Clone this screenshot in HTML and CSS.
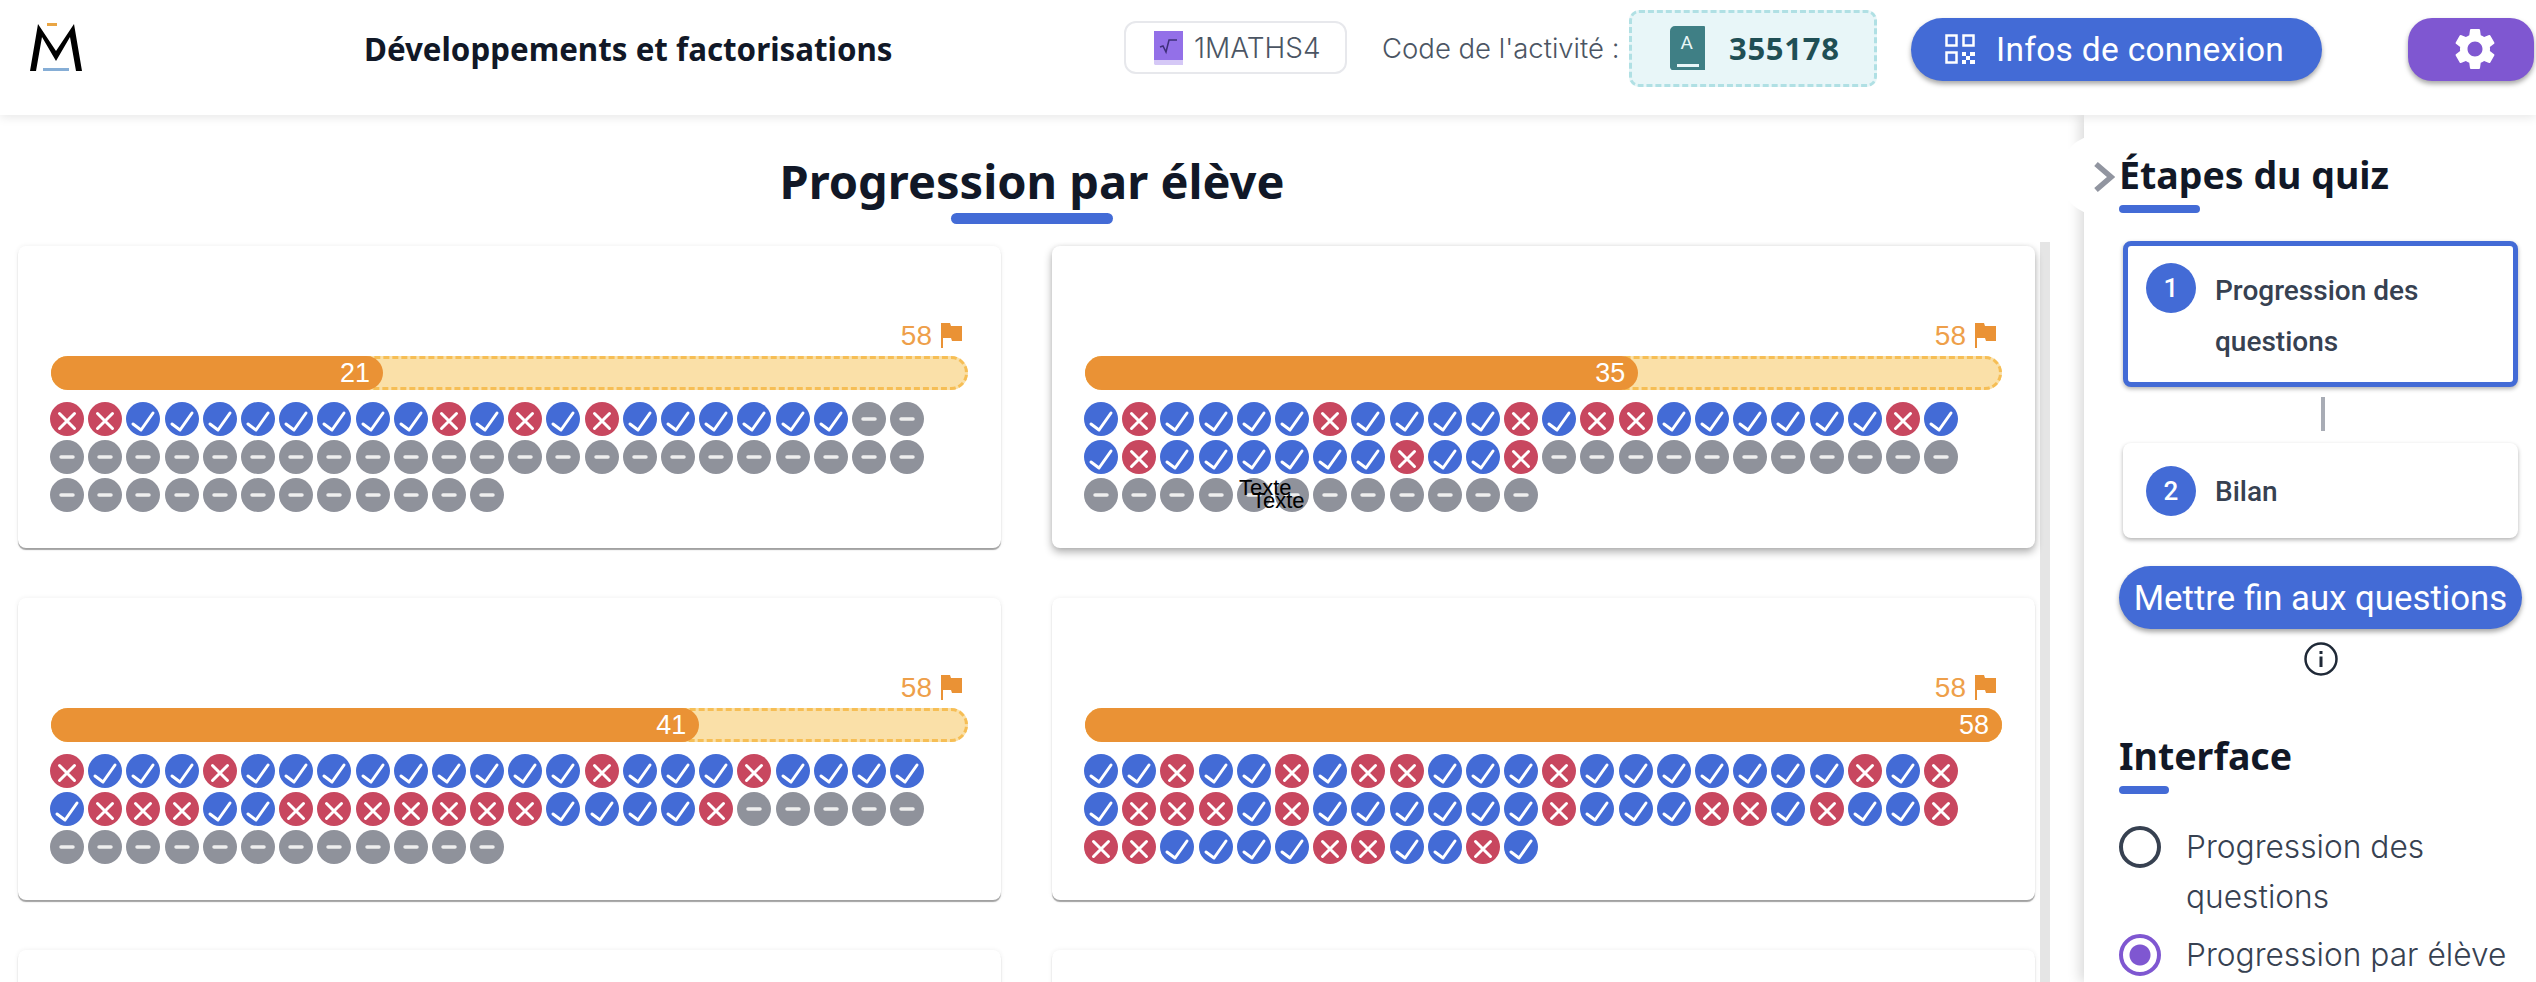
FILE: index.html
```html
<!DOCTYPE html>
<html lang="fr">
<head>
  <meta charset="UTF-8" />
  <title>Développements et factorisations</title>
  <link rel="stylesheet" href="styles.css">
</head>
<body>

<svg class="sprites" width="0" height="0">
  <symbol id="ic-ok" viewBox="0 0 34 34"><path d="M7 22l8 6L27 11" fill="none" stroke="#fff" stroke-width="3" stroke-linecap="round" stroke-linejoin="round"/></symbol>
  <symbol id="ic-ko" viewBox="0 0 34 34"><path d="M9.5 11.500l15 15M24.500 11.500l-15 15" fill="none" stroke="#fff" stroke-width="3" stroke-linecap="round"/></symbol>
  <symbol id="ic-vide" viewBox="0 0 34 34"><path d="M11 17h12" fill="none" stroke="#eee" stroke-width="3.500" stroke-linecap="round"/></symbol>
  <symbol id="ic-drapeau" viewBox="0 0 21 25"><path d="M0 0h2v25H0z M2 0h7l1 3h11v15H11l-1-3H2z" fill="#ea9235"/></symbol>
</svg>

<header class="entete">
  <svg class="logo" viewBox="0 0 52 48" width="52" height="48">
    <path d="M17 0h10v3H17z" fill="#e9a544"/>
    <path d="M13 45h26v3H13z" fill="#86aed6"/>
    <path d="M8 1L0 48h6L12 14l14 24 14-24 6 34h6L44 1 26 28z" fill="#000"/>
  </svg>
  <div class="titre-activite">Développements et factorisations</div>
  <div class="classe">
    <svg width="30" height="34" viewBox="0 0 30 34">
      <path d="M0 0h29v34H1l-1-1z" fill="#d5c8f6"/>
      <path d="M0 0h29v29H0z" fill="#9370e8"/>
      <path d="M6 16l3-1 3 6 3-12h8" fill="none" stroke="#3f2f7a" stroke-width="1.500"/>
    </svg>
    <span>1MATHS4</span>
  </div>
  <div class="code-label">Code de l'activité :</div>
  <div class="code-box">
    <svg width="36" height="44" viewBox="0 0 36 44">
      <path d="M5 0h29a1 1 0 0 1 1 1v35H7a3 3 0 0 0 0 6h28v2H6a6 6 0 0 1-6-6V5a5 5 0 0 1 5-5z" fill="#3f7f85"/>
      <path d="M6 35h29v9H6a4 4 0 0 1-6-4v-2a5 5 0 0 1 6-3z" fill="#3f7f85"/>
      <path d="M7 38h22v3H7z" fill="#e8f6f8"/>
      <text x="17" y="23" class="book-lettre">A</text>
    </svg>
    <span>355178</span>
  </div>
  <button class="btn-infos" type="button">
    <svg width="31" height="30" viewBox="0 0 31 30" fill="none" stroke="#fff" stroke-width="2.500">
      <rect x="1.500" y="1.500" width="10" height="10"/>
      <rect x="18.500" y="1.500" width="10" height="10"/>
      <rect x="1.500" y="18.500" width="10" height="10"/>
      <path d="M17 18h4v4h-4z M25 18h5v4h-5z M21 22h4v4h-4z M17 26h4v4h-4z M25 26h5v4h-5z" fill="#fff" stroke="none"/>
    </svg>
    <span>Infos de connexion</span>
  </button>
  <button class="btn-reglages" type="button">
    <svg width="50" height="50" viewBox="0 0 24 24"><path fill="#fff" d="M19.140 12.940c.04-.3.06-.61.06-.94 0-.32-.02-.64-.07-.94l2.030-1.580c.18-.14.23-.41.12-.61l-1.920-3.320c-.12-.22-.37-.29-.59-.22l-2.390.96c-.5-.38-1.030-.7-1.620-.94l-.36-2.540c-.04-.24-.24-.41-.48-.41h-3.840c-.24 0-.43.17-.47.41l-.36 2.540c-.59.24-1.130.57-1.620.94l-2.390-.96c-.22-.08-.47 0-.59.22L2.740 8.870c-.12.21-.08.47.12.61l2.030 1.580c-.05.3-.09.63-.09.94s.02.64.07.94l-2.030 1.580c-.18.14-.23.41-.12.61l1.920 3.320c.12.22.37.29.59.22l2.390-.96c.5.38 1.030.7 1.620.94l.36 2.540c.05.24.24.41.48.41h3.840c.24 0 .44-.17.47-.41l.36-2.540c.59-.24 1.130-.56 1.620-.94l2.390.96c.22.08.47 0 .59-.22l1.920-3.320c.12-.22.07-.47-.12-.61l-2.010-1.580zM12 15.600c-1.980 0-3.600-1.620-3.600-3.600s1.620-3.600 3.600-3.600 3.600 1.620 3.600 3.600-1.620 3.600-3.600 3.600z"/></svg>
  </button>
</header>

<div class="page">
  <main class="zone">
    <h1 class="titre-page">Progression par élève</h1>
    <div class="defilement">
      <div class="cartes" id="cartes"></div>
      <div class="barre-defil"></div>
    </div>
  </main>

  <aside class="panneau">
    <div class="onglet">
      <svg width="22" height="32" viewBox="0 0 22 32"><path d="M3 3l15 13L3 29" fill="none" stroke="#9195a0" stroke-width="5.500"/></svg>
    </div>
    <h2 class="titre-panneau titre-etapes">Étapes du quiz</h2>
    <div class="etape etape-active">
      <span class="etape-num">1</span>
      <span class="etape-nom">Progression des questions</span>
    </div>
    <div class="etape-lien"></div>
    <div class="etape">
      <span class="etape-num">2</span>
      <span class="etape-nom">Bilan</span>
    </div>
    <button class="btn-fin" type="button">Mettre fin aux questions</button>
    <svg class="info" width="36" height="36" viewBox="0 0 36 36">
      <circle cx="18" cy="18" r="15.500" fill="none" stroke="#1f2937" stroke-width="2.500"/>
      <path d="M16.500 15.500h3V26h-3z M16.500 10h3v3h-3z" fill="#1f2937"/>
    </svg>
    <h2 class="titre-panneau titre-interface">Interface</h2>
    <label class="choix"><span class="radio"></span><span>Progression des questions</span></label>
    <label class="choix"><span class="radio radio-on"></span><span>Progression par élève</span></label>
  </aside>
</div>

<script src="script.js"></script>
</body>
</html>
```

FILE: styles.css
```css
* { box-sizing: border-box; }
html, body { height: 100%; }
body {
  margin: 0;
  overflow: hidden;
  background: #fff;
  color: #111827;
  font-family: "Inter", "Liberation Sans", sans-serif;
}
.sprites { position: absolute; }
button { border: none; font-family: inherit; cursor: pointer; }

/* entete */
.entete {
  position: relative;
  z-index: 5;
  display: flex;
  align-items: center;
  height: 115px;
  background: #fff;
  box-shadow: 0 2px 10px rgba(0, 0, 0, .1);
}
.logo { margin: -22px 0 0 30px; flex: none; }
.titre-activite {
  margin-left: 282px;
  width: 529px;
  font: 700 31.300px "Noto Sans", sans-serif;
  color: #111827;
  white-space: nowrap;
  margin-top: -17px;
}
.classe {
  display: flex;
  align-items: center;
  gap: 10px;
  width: 223px;
  height: 53px;
  margin: -20px 0 0 231px;
  padding-left: 28px;
  border: 2px solid #e7e8ec;
  border-radius: 12px;
  font-weight: 300;
  font-size: 28px;
  color: #4b5563;
}
.code-label {
  margin: -20px 0 0 35px;
  width: 247px;
  font-weight: 300;
  font-size: 27.500px;
  color: #4b5563;
  white-space: nowrap;
}
.code-box {
  display: flex;
  align-items: center;
  gap: 23px;
  width: 248px;
  height: 77px;
  margin: -19px 0 0 0;
  padding-left: 38px;
  background: #e8f6f8;
  border: 3px dashed #b0e0e4;
  border-radius: 10px;
  font: 700 31px "Noto Sans", sans-serif;
  letter-spacing: .7px;
  color: #1f4f55;
}
.book-lettre { font: 400 19px "Roboto", sans-serif; fill: #e8f6f8; text-anchor: middle; }
.btn-infos {
  display: flex;
  align-items: center;
  gap: 20px;
  width: 411px;
  height: 63px;
  margin: -17px 0 0 34px;
  padding-left: 34px;
  background: #436bd6;
  border-radius: 32px;
  box-shadow: 0 3px 5px rgba(0, 0, 0, .35);
  color: #fff;
  font: 400 33.500px "Roboto", sans-serif;
  letter-spacing: .3px;
  white-space: nowrap;
}
.btn-reglages {
  display: flex;
  align-items: center;
  justify-content: center;
  width: 126px;
  height: 63px;
  margin: -17px 0 0 86px;
  padding: 0 0 0 8px;
  background: #7f57d1;
  border-radius: 24px;
  box-shadow: 0 3px 5px rgba(0, 0, 0, .35);
}

/* zone principale */
.page { display: flex; height: calc(100% - 115px); overflow: hidden; }
.zone { flex: 1; min-width: 0; }
.titre-page {
  width: 2036px;
  margin: 0 0 0 14px;
  padding-top: 34px;
  font: 700 47px/64px "Noto Sans", sans-serif;
  text-align: center;
  color: #111827;
}
.titre-page::after {
  content: "";
  display: block;
  width: 162px;
  height: 11px;
  margin: 0 auto;
  background: #436bd6;
  border-radius: 6px;
}
.defilement { display: flex; height: 740px; margin-top: 18px; overflow: hidden; }
.cartes {
  display: grid;
  grid-template-columns: 983px 983px;
  column-gap: 51px;
  row-gap: 50px;
  align-content: start;
  width: 2040px;
  padding: 4px 0 0 18px;
}
.barre-defil { width: 10px; background: #e5e5e5; }

.carte {
  position: relative;
  height: 302px;
  padding: 77px 33px 35px 32px;
  background: #fff;
  border-radius: 8px;
  box-shadow: 0 2px 1px rgba(0, 0, 0, .35), 0 0 5px rgba(0, 0, 0, .07);
}
.carte-survol { box-shadow: 0 4px 8px rgba(0, 0, 0, .32), 0 0 4px rgba(0, 0, 0, .06); }
.objectif {
  display: flex;
  align-items: center;
  justify-content: flex-end;
  gap: 9px;
  height: 25px;
  margin: 0 6px 8px 0;
  font: 400 28px "Liberation Sans", sans-serif;
  color: #ee9f4a;
}
.objectif svg { width: 21px; height: 25px; }
.barre {
  position: relative;
  height: 34px;
  margin: 0 0 12px 1px;
  background: #fae0a8;
  border-radius: 17px;
}
.barre::before {
  content: "";
  position: absolute;
  inset: 0;
  border: 3px dashed #f6be55;
  border-radius: 17px;
}
.barre-fill {
  position: relative;
  height: 34px;
  padding-right: 13px;
  background: #ea9235;
  border-radius: 17px;
  color: #fff;
  font: 400 27px/34px "Liberation Sans", sans-serif;
  text-align: right;
}
.pastilles {
  position: relative;
  display: grid;
  grid-template-columns: repeat(23, 34px);
  grid-auto-rows: 34px;
  gap: 4.200px;
}
.pastille { display: block; width: 34px; height: 34px; border-radius: 50%; }
.pastille svg { display: block; width: 34px; height: 34px; }
.ok { background: #436bd6; }
.ko { background: #c8475f; }
.vide { background: #8f929b; }
.texte-flottant {
  position: absolute;
  color: #000;
  font: 400 22px "Liberation Sans", sans-serif;
}
.texte-a { left: 155px; top: 73px; }
.texte-b { left: 168px; top: 86px; }

/* panneau de droite */
.panneau {
  position: relative;
  flex: none;
  width: 452px;
  padding-left: 35px;
  background: #fff;
  box-shadow: -4px 0 12px rgba(0, 0, 0, .15);
}
.onglet {
  position: absolute;
  left: -25px;
  top: 20px;
  width: 60px;
  height: 80px;
  padding: 26px 0 0 34px;
  background: #fff;
  border-radius: 40px 0 0 40px;
}
.titre-panneau {
  margin: 0;
  font: 700 37.500px/44px "Noto Sans", sans-serif;
  color: #111827;
}
.titre-panneau::after {
  content: "";
  display: block;
  height: 8px;
  background: #436bd6;
  border-radius: 4px;
  margin-top: 8px;
}
.titre-etapes { padding-top: 38px; }
.titre-etapes::after { width: 81px; }
.titre-interface { margin-top: 57px; }
.titre-interface::after { width: 50px; }

.etape {
  display: flex;
  align-items: center;
  gap: 19px;
  width: 395px;
  min-height: 95px;
  margin-left: 4px;
  padding: 0 20px 0 23px;
  background: #fff;
  border-radius: 8px;
  box-shadow: 0 2px 4px rgba(0, 0, 0, .3);
  font: 500 28px/51px "Roboto", sans-serif;
  color: #374151;
}
.etape-nom { padding-top: 2px; }
.etape-active {
  align-items: flex-start;
  height: 146px;
  margin-top: 28px;
  padding: 17px 20px 0 18px;
  border: 5px solid #436bd6;
}
.etape-num {
  flex: none;
  width: 50px;
  height: 50px;
  background: #436bd6;
  border-radius: 50%;
  color: #fff;
  font: 500 26px/50px "Roboto", sans-serif;
  text-align: center;
}
.etape-lien { width: 4px; height: 34px; margin: 10px 0 12px 202px; background: #a8acb5; }
.btn-fin {
  display: block;
  width: 403px;
  height: 63px;
  margin-top: 28px;
  background: #436bd6;
  border-radius: 32px;
  box-shadow: 0 3px 5px rgba(0, 0, 0, .35);
  color: #fff;
  font: 400 34.800px "Roboto", sans-serif;
  white-space: nowrap;
  padding: 0;
}
.info { display: block; margin: 12px 0 0 184px; }
.choix {
  display: flex;
  gap: 25px;
  font-weight: 300;
  font-size: 31.700px;
  line-height: 50px;
  color: #374151;
}
.titre-interface + .choix { margin-top: 28px; }
.choix + .choix { margin-top: 8px; }
.radio {
  flex: none;
  width: 42px;
  height: 42px;
  margin-top: 4px;
  border: 4px solid #374151;
  border-radius: 50%;
}
.radio-on {
  border-color: #7f57d1;
  background: radial-gradient(circle, #7f57d1 0 10px, #fff 11px);
}
```

FILE: script.js
```js
// o = juste, x = faux, - = pas encore repondu
const eleves = [
  { score: 21, rep: "xxooooooooxoxoxoooooo--" + "-".repeat(35) },
  { score: 35, rep: "oxooooxooooxoxxooooooxo" + "oxooooooxoox" + "-".repeat(23), survol: true },
  { score: 41, rep: "xoooxoooooooooxoooxoooo" + "oxxxooxxxxxxxoooox" + "-".repeat(17) },
  { score: 58, rep: "ooxooxoxxoooxoooooooxox" + "oxxxoxooooooxoooxxoxoox" + "xxooooxxooxo" },
  { vide: true },
  { vide: true }
];

const classes = { o: "ok", x: "ko", "-": "vide" };
const icones = { o: "ic-ok", x: "ic-ko", "-": "ic-vide" };
const conteneur = document.getElementById("cartes");

eleves.forEach(e => {
  const carte = document.createElement("div");
  carte.className = e.survol ? "carte carte-survol" : "carte";
  if (!e.vide) {
    let html = `<div class="objectif"><span>58</span><svg><use href="#ic-drapeau"/></svg></div>`;
    html += `<div class="barre"><div class="barre-fill" style="width:${(e.score / 58 * 100).toFixed(2)}%">${e.score}</div></div>`;
    html += `<div class="pastilles">`;
    for (const c of e.rep) {
      html += `<span class="pastille ${classes[c]}"><svg><use href="#${icones[c]}"/></svg></span>`;
    }
    if (e.survol) {
      html += `<span class="texte-flottant texte-a">Texte</span><span class="texte-flottant texte-b">Texte</span>`;
    }
    html += `</div>`;
    carte.innerHTML = html;
  }
  conteneur.appendChild(carte);
});
```
